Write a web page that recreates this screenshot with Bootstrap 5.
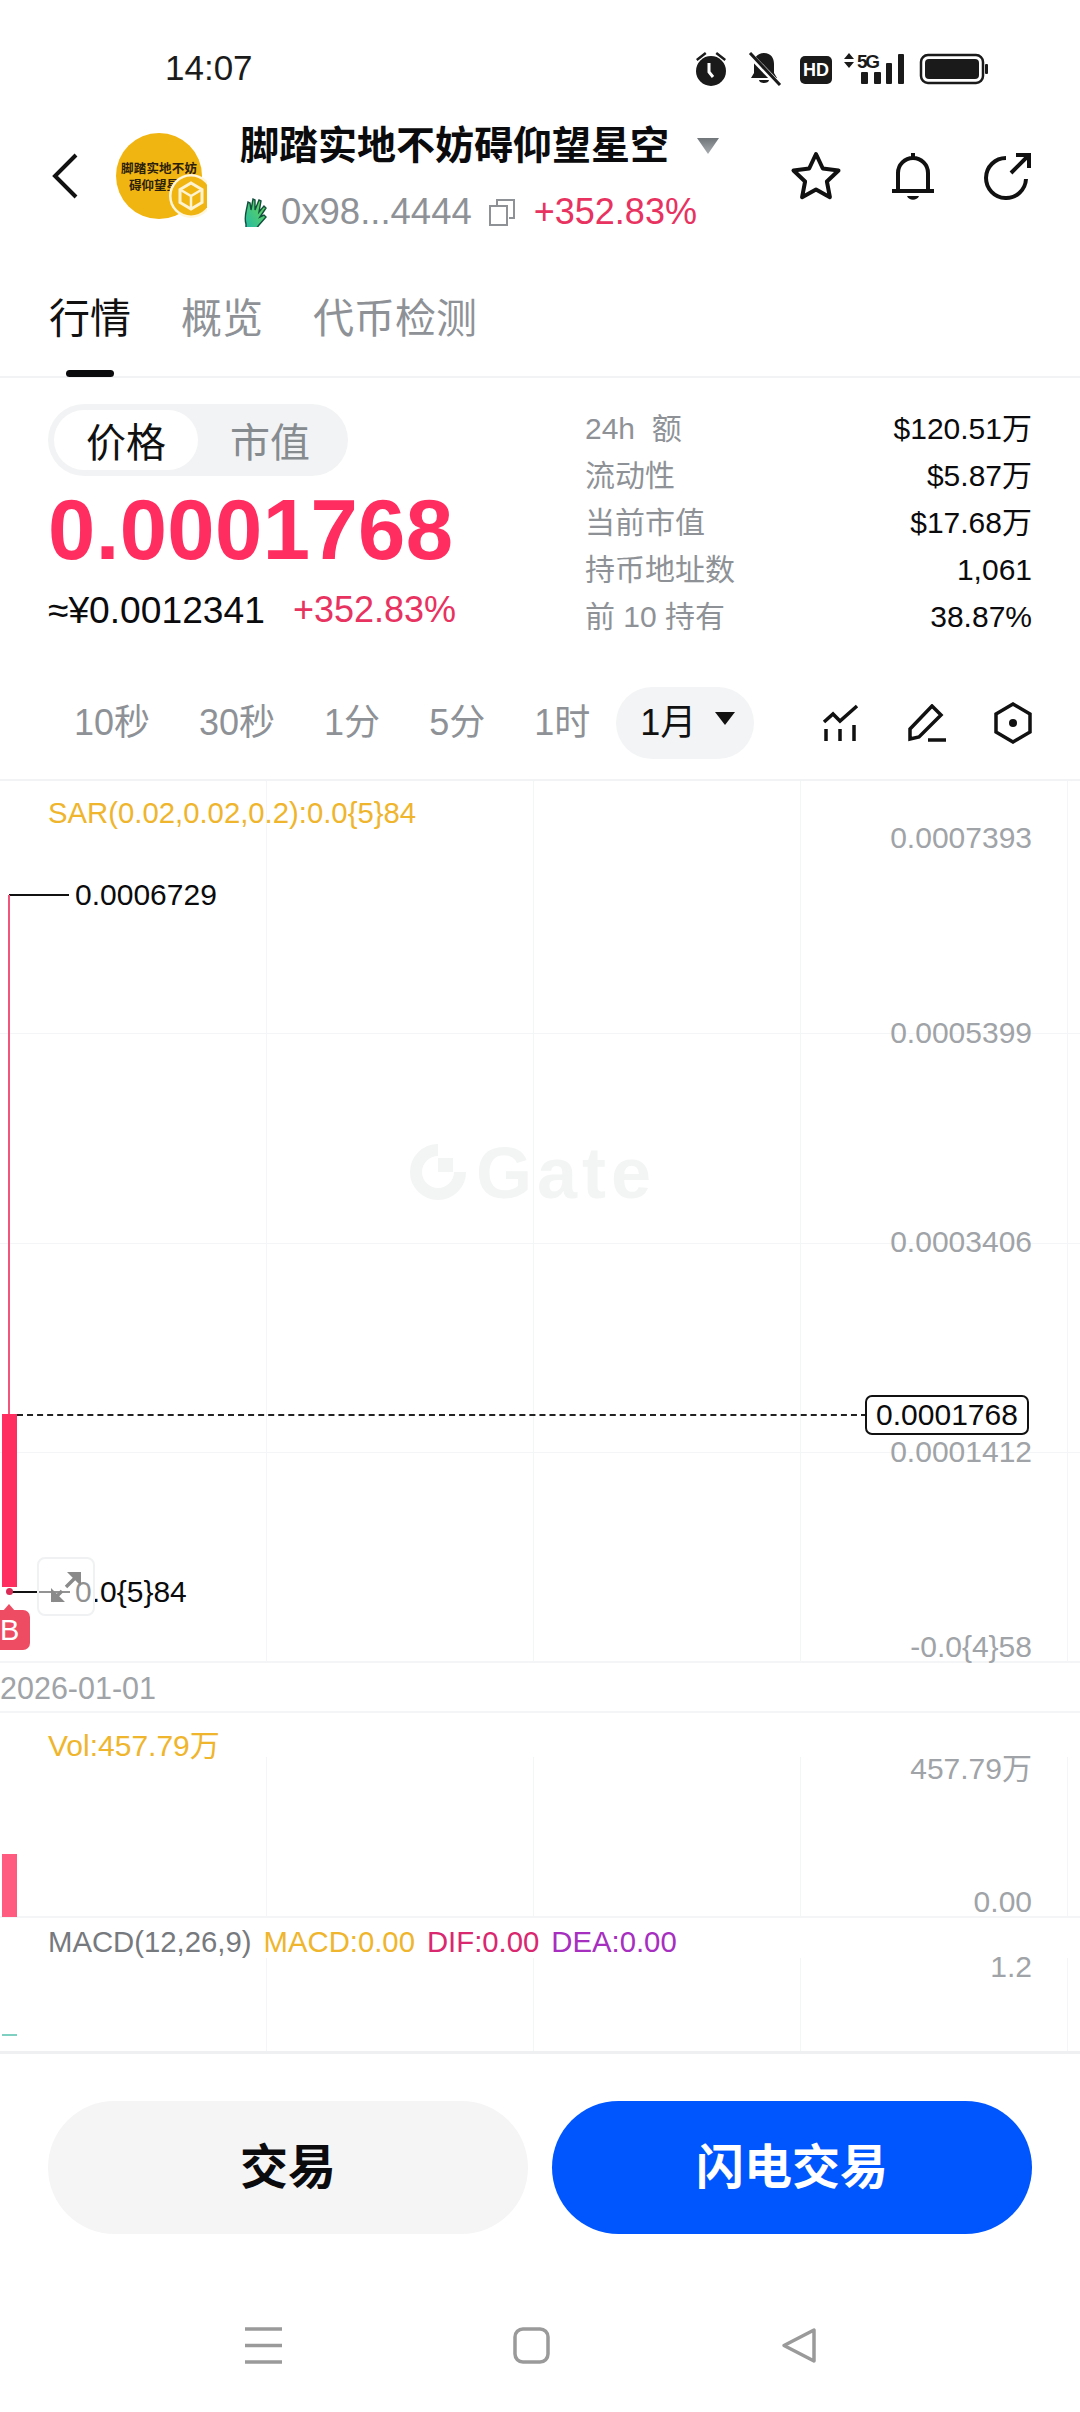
<!DOCTYPE html>
<html lang="zh-CN">
<head>
  <meta charset="UTF-8" />
  <meta name="viewport" content="width=device-width, initial-scale=1.0"/>
  <title>行情</title>
  <link href="https://cdn.jsdelivr.net/npm/bootstrap@5.3.3/dist/css/bootstrap.min.css" rel="stylesheet">
  <style>
    body { width: 1080px; height: 2412px; overflow: hidden; background: #fff; color: #0b0b0d; font-family: "Liberation Sans", "Noto Sans CJK SC", sans-serif; }
    .status-row { height: 100px; padding: 40px 91px 0 165px; }
    .status-time { font-size: 35px; line-height: 56px; color: #1b1b1b; }
    .status-icons { height: 56px; }
    .head-row { height: 170px; padding: 0 48px 0 52px; }
    .back-icon { margin-top: 53px; flex: none; }
    .coin-avatar { width: 92px; height: 92px; margin-left: 37px; margin-top: 30px; flex: none; }
    .coin-info { margin-left: 33px; margin-top: 20px; }
    .coin-title { font-size: 39px; line-height: 52px; font-weight: 700; }
    .coin-sub { height: 44px; margin-top: 18px; font-size: 36.500px; line-height: 44px; color: #8e9297; }
    .hand-icon { margin-left: 3px; margin-right: 11px; flex: none; }
    .copy-icon { margin-left: 17px; margin-right: 19px; flex: none; }
    .head-actions { margin-top: 50px; gap: 48px; }
    .up-text { color: #e8325f; }
    .tab-row { height: 108px; padding: 21px 0 0 49px; border-bottom: 2px solid #f2f3f4; font-size: 41px; line-height: 56px; color: #8e9297; gap: 50px; }
    .tab-on { color: #111; position: relative; }
    .tab-on::after { content: ""; position: absolute; left: 17px; top: 79px; width: 48px; height: 7px; border-radius: 4px; background: #0b0b0d; }
    .quote-row { height: 298px; padding: 26px 48px 0; }
    .mode-switch { width: 300px; height: 72px; padding: 6px; border-radius: 36px; background: #f2f3f4; font-size: 40px; line-height: 66px; color: #868b90; }
    .mode-on { width: 144px; height: 60px; background: #fff; color: #111; border-radius: 30px; text-align: center; }
    .mode-off { width: 144px; height: 60px; text-align: center; }
    .price-big { margin-top: 8px; font-size: 85px; line-height: 92px; font-weight: 700; color: #ff2d60; letter-spacing: .4px; }
    .price-sub { margin-top: 12px; font-size: 37.200px; line-height: 44px; white-space: nowrap; }
    .price-pct { font-size: 36px; margin-left: 28px; }
    .stat-list { width: 447px; margin-top: 1px; }
    .stat-line { height: 47px; line-height: 47px; font-size: 30px; }
    .stat-key { color: #8e9297; }
    .range-row { height: 103px; padding: 0 48px 10px 74px; font-size: 36px; color: #8e9297; }
    .range-list { gap: 49px; margin-right: 26px; }
    .range-pill { width: 138px; height: 72px; border-radius: 36px; background: #f3f4f5; color: #111; line-height: 72px; padding-left: 24px; gap: 19px; }
    .range-tri { width: 0; height: 0; border-left: 10px solid transparent; border-right: 10px solid transparent; border-top: 13px solid #111; margin-top: -8px; }
    .tool-icons { gap: 47px; }
    .chart-lines { background-image: linear-gradient(to right, transparent 266px, #f4f5f6 266px, #f4f5f6 267px, transparent 267px); background-size: 267px 100%; }
    .chart-main { height: 884px; border-top: 2px solid #f2f3f4; border-bottom: 2px solid #f4f5f6; position: relative; }
    .date-row { height: 50px; border-bottom: 2px solid #f4f5f6; font-size: 30.500px; line-height: 50px; color: #a0a3a7; }
    .vol-pane { height: 205px; position: relative; border-bottom: 2px solid #f4f5f6; }
    .macd-pane { height: 136px; position: relative; border-bottom: 3px solid #eff0f1; }
    .pane-grid { position: absolute; left: 0; right: 0; bottom: 0; }
    .hline { position: absolute; left: 0; right: 0; height: 1px; background: #f4f5f6; }
    .axis-val { position: absolute; right: 48px; font-size: 30px; line-height: 36px; color: #a0a3a7; white-space: nowrap; }
    .chart-text { position: absolute; font-size: 30px; line-height: 36px; white-space: nowrap; }
    .text-sm29 { font-size: 29.300px; }
    .gold-text { color: #efb52d; }
    .wick-line { position: absolute; left: 8px; width: 2px; background: #f0557c; }
    .candle-body { position: absolute; left: 2px; width: 15px; background: #ff2d60; }
    .lead-line { position: absolute; height: 2px; background: #111; }
    .last-dash { position: absolute; left: 17px; width: 850px; border-top: 2px dashed #222; }
    .last-box { position: absolute; left: 865px; top: 614px; width: 164px; height: 40px; background: #fff; border: 2px solid #111; border-radius: 7px; font-size: 30px; line-height: 35px; text-align: center; }
    .expand-box { position: absolute; left: 37px; top: 776px; width: 58px; height: 59px; border: 2px solid #f0f1f2; border-radius: 8px; background: rgba(255,255,255,.55); }
    .buy-tag { position: absolute; left: 0; top: 829px; width: 30px; height: 40px; background: #ee4c63; color: #fff; border-radius: 0 7px 7px 0; font-size: 29px; line-height: 41px; }
    .buy-tag::before { content: ""; position: absolute; left: 3px; top: -6px; border-left: 6px solid transparent; border-right: 6px solid transparent; border-bottom: 7px solid #ee4c63; }
    .buy-dot { position: absolute; left: 6px; top: 807px; width: 7px; height: 7px; border-radius: 50%; background: #d92b55; }
    .gate-mark { position: absolute; left: 408px; top: 359px; }
    .gate-word { margin: -3px 0 0 8px; font-size: 72px; line-height: 72px; font-weight: 700; letter-spacing: 5px; color: #f3f4f4; }
    .action-row { height: 186px; padding: 47px 48px 0; gap: 24px; }
    .action-btn { width: 480px; height: 133px; border-radius: 67px; border: 0; font-size: 48px; font-weight: 700; line-height: 133px; padding: 0; }
    .btn-soft { background: #f5f5f6; color: #0b0b0d; }
    .btn-flash { background: #0056fe; color: #fff; }
    .nav-row { height: 130px; padding: 87px 0 0 245px; }
    .macd-gray { color: #76797d; }
    .macd-pink { color: #d9286f; }
    .macd-purple { color: #a62fc0; }
  </style>
</head>
<body>
  <div class="status-row d-flex justify-content-between">
    <div class="status-time">14:07</div>
    <svg class="status-icons" width="294" height="56" viewBox="696 40 294 56">
      <g fill="#1a1a1a" stroke="none">
        <circle cx="712" cy="71" r="15"/>
        <path d="M697 59l9-7 1.500 2-9 7zM727 59l-9-7-1.500 2 9 7z"/>
      </g>
      <path d="M710 63v9l4 5" fill="none" stroke="#fff" stroke-width="3"/>
      <path d="M765 53c-7 0-10 5-10 11v9l-3 5h26l-3-5v-9c0-6-3-11-10-11zM760 80h10c0 4-10 4-10 0z" fill="#1a1a1a"/>
      <path d="M750 54l31 32" stroke="#fff" stroke-width="6"/>
      <path d="M751 53l30 32" stroke="#1a1a1a" stroke-width="3"/>
      <rect x="801" y="56" width="32" height="28" rx="5" fill="#1a1a1a"/>
      <text x="817" y="76" text-anchor="middle" font-size="18" font-weight="700" fill="#fff" font-family="Liberation Sans">HD</text>
      <path d="M845 59l5-6 5 6zM845 62l5 6 5-6z" fill="#1a1a1a"/>
      <text x="858" y="68" font-size="19" font-weight="700" fill="#1a1a1a" font-family="Liberation Sans" textLength="23">5G</text>
      <g fill="#1a1a1a">
        <rect x="862" y="72" width="7" height="12" rx="1"/>
        <rect x="875" y="72" width="7" height="12" rx="1"/>
        <rect x="887" y="63" width="6" height="21" rx="1"/>
        <rect x="899" y="54" width="6" height="30" rx="1"/>
        <rect x="926" y="59" width="54" height="20" rx="4"/>
        <rect x="986" y="64" width="3" height="10" rx="1"/>
      </g>
      <rect x="922" y="55" width="62" height="28" rx="7" fill="none" stroke="#1a1a1a" stroke-width="2.500"/>
    </svg>
  </div>

  <div class="head-row d-flex align-items-start">
    <svg class="back-icon" width="26" height="46" viewBox="0 0 26 46"><path d="M24 2L3 23l21 21" fill="none" stroke="#111" stroke-width="4"/></svg>
    <svg class="coin-avatar" viewBox="0 0 92 92">
      <circle cx="44" cy="46" r="43" fill="#f1b512"/>
      <text x="44" y="43" text-anchor="middle" font-size="12.500" font-weight="700" fill="#2b2008" font-family="Noto Sans CJK SC" textLength="76">脚踏实地不妨</text>
      <text x="39" y="60" text-anchor="middle" font-size="12.500" font-weight="700" fill="#2b2008" font-family="Noto Sans CJK SC">碍仰望星</text>
      <circle cx="76" cy="66" r="22" fill="#fff6dc"/>
      <circle cx="76" cy="66" r="19.500" fill="#f1b512"/>
      <g fill="none" stroke="#fff4d2" stroke-width="3">
        <path d="M76 53l11 6.500v13L76 79l-11-6.500v-13z"/>
        <path d="M65 59.500L76 66l11-6.500M76 66v13" stroke-width="2.500"/>
      </g>
    </svg>
    <div class="coin-info flex-grow-1">
      <div class="d-flex align-items-center coin-title">
        <span>脚踏实地不妨碍仰望星空</span>
        <svg style="margin-left:28px" width="22" height="18" viewBox="0 0 22 18"><defs><linearGradient id="caretFill" x1="0" y1="0" x2="0" y2="1"><stop offset="0" stop-color="#70757a"/><stop offset="1" stop-color="#a8acb0"/></linearGradient></defs><path d="M0 1h22L11 17z" fill="url(#caretFill)"/></svg>
      </div>
      <div class="coin-sub d-flex align-items-center">
        <svg class="hand-icon" width="27" height="30" viewBox="0 0 27 30"><defs><linearGradient id="handFill" x1="1" y1="0" x2="0" y2="1"><stop offset="0" stop-color="#6fd84f"/><stop offset="1" stop-color="#1fb8a8"/></linearGradient></defs><path d="M3 27C1 21 3 15 4 10l1-5 2 1 1 7 2-11 2 1 0 10 4-10 2 1-2 11 5-6 2 2-6 9 4-2 2 2-7 8c-2 3-4 5-7 5-3 0-5-1-6-2z" fill="url(#handFill)" stroke="#12503e" stroke-width="1.400"/></svg>
        <span>0x98...4444</span>
        <svg class="copy-icon" width="26" height="27" viewBox="0 0 26 27"><path d="M8 6V1h17v18h-5M1 7h17v19H1z" fill="none" stroke="#8e9297" stroke-width="2"/></svg>
        <span class="up-text" style="font-size:36px">+352.83%</span>
      </div>
    </div>
    <div class="head-actions d-flex align-items-center">
      <svg width="52" height="50" viewBox="0 0 52 50"><path d="M26 3l6.800 14.500 15.700 2-11.600 11 3 15.700L26 38.500l-13.900 7.700 3-15.700L3.500 19.500l15.700-2z" fill="none" stroke="#111" stroke-width="4" stroke-linejoin="round"/></svg>
      <svg width="46" height="52" viewBox="0 0 46 52"><path d="M2 41h42M8 41V23a15 15 0 0 1 30 0v18M23 3v5" fill="none" stroke="#111" stroke-width="4"/><path d="M17 46h12c-2 5-10 5-12 0z" fill="#111"/></svg>
      <svg width="48" height="48" viewBox="0 0 48 48"><path d="M42 27A20 20 0 1 1 22 6M27 21L44 4M32 3h13v13" fill="none" stroke="#111" stroke-width="4"/></svg>
    </div>
  </div>

  <div class="tab-row d-flex">
    <div class="tab-on">行情</div>
    <div>概览</div>
    <div>代币检测</div>
  </div>

  <div class="quote-row d-flex justify-content-between">
    <div>
      <div class="mode-switch d-flex">
        <div class="mode-on">价格</div>
        <div class="mode-off">市值</div>
      </div>
      <div class="price-big">0.0001768</div>
      <div class="price-sub d-flex align-items-center"><span>≈¥0.0012341</span><span class="up-text price-pct">+352.83%</span></div>
    </div>
    <div class="stat-list">
      <div class="stat-line d-flex justify-content-between"><span class="stat-key">24h &nbsp;额</span><span>$120.51万</span></div>
      <div class="stat-line d-flex justify-content-between"><span class="stat-key">流动性</span><span>$5.87万</span></div>
      <div class="stat-line d-flex justify-content-between"><span class="stat-key">当前市值</span><span>$17.68万</span></div>
      <div class="stat-line d-flex justify-content-between"><span class="stat-key">持币地址数</span><span>1,061</span></div>
      <div class="stat-line d-flex justify-content-between"><span class="stat-key">前 10 持有</span><span>38.87%</span></div>
    </div>
  </div>

  <div class="range-row d-flex align-items-center">
    <div class="range-list d-flex">
      <span>10秒</span><span>30秒</span><span>1分</span><span>5分</span><span>1时</span>
    </div>
    <div class="range-pill d-flex align-items-center"><span>1月</span><span class="range-tri"></span></div>
    <div class="tool-icons d-flex align-items-center ms-auto">
      <svg width="38" height="38" viewBox="0 0 38 38"><path d="M2 18l9-8 7 7L35 2M4 25v12M18 25v12M32 21v16" fill="none" stroke="#111" stroke-width="3.500"/></svg>
      <svg width="40" height="38" viewBox="0 0 40 38"><path d="M25 2l9 9L12 33l-9 2 0-10zM21 36h18" fill="none" stroke="#111" stroke-width="3.500"/></svg>
      <svg width="38" height="42" viewBox="0 0 38 42"><path d="M19 2l17 10v18L19 40 2 30V12z" fill="none" stroke="#111" stroke-width="3.500"/><circle cx="19" cy="21" r="4" fill="#111"/></svg>
    </div>
  </div>

  <div class="chart-main chart-lines">
    <div class="hline" style="top:252px"></div>
    <div class="hline" style="top:462px"></div>
    <div class="hline" style="top:671px"></div>
    <div class="gate-mark d-flex align-items-start">
      <svg width="60" height="64" viewBox="0 0 60 64">
        <path d="M30 10A22 22 0 1 0 52 32" fill="none" stroke="#f3f4f4" stroke-width="12"/>
        <rect x="30" y="18" width="15" height="14" fill="#f3f4f4"/>
      </svg>
      <span class="gate-word">Gate</span>
    </div>
    <div class="chart-text text-sm29 gold-text" style="left:48px;top:14px;">SAR(0.02,0.02,0.2):0.0{5}84</div>
    <div class="axis-val" style="top:39px">0.0007393</div>
    <div class="axis-val" style="top:234px">0.0005399</div>
    <div class="axis-val" style="top:443px">0.0003406</div>
    <div class="axis-val" style="top:653px">0.0001412</div>
    <div class="axis-val" style="top:848px">-0.0{4}58</div>
    <div class="lead-line" style="left:9px;top:113px;width:60px"></div>
    <div class="chart-text" style="left:75px;top:96px">0.0006729</div>
    <div class="wick-line" style="top:114px;height:519px"></div>
    <div class="candle-body" style="top:633px;height:173px"></div>
    <div class="last-dash" style="top:633px"></div>
    <div class="last-box">0.0001768</div>
    <div class="lead-line" style="left:10px;top:810px;width:60px"></div>
    <div class="buy-dot"></div>
    <div class="chart-text" style="left:75px;top:793px">0.0{5}84</div>
    <div class="expand-box d-flex align-items-center justify-content-center">
      <svg width="32" height="32" viewBox="0 0 32 32"><path d="M16 16L27 5M2 30l10-10" stroke="#8a8a8a" stroke-width="3.500"/><path d="M17 1h14v14zM1 17v14h14z" fill="#8a8a8a"/></svg>
    </div>
    <div class="buy-tag">B</div>
  </div>

  <div class="date-row">2026-01-01</div>

  <div class="vol-pane">
    <div class="pane-grid chart-lines" style="top:44px"></div>
    <div class="chart-text gold-text" style="left:48px;top:15px">Vol:457.79万</div>
    <div class="axis-val" style="top:38px">457.79万</div>
    <div class="axis-val" style="top:171px">0.00</div>
    <div class="candle-body" style="top:141px;height:63px;background:#ff5a80"></div>
  </div>

  <div class="macd-pane">
    <div class="pane-grid chart-lines" style="top:40px"></div>
    <div class="chart-text text-sm29 d-flex" style="left:48px;top:6px;gap:12px">
      <span class="macd-gray">MACD(12,26,9)</span>
      <span class="gold-text">MACD:0.00</span>
      <span class="macd-pink">DIF:0.00</span>
      <span class="macd-purple">DEA:0.00</span>
    </div>
    <div class="axis-val" style="top:31px">1.2</div>
    <div class="candle-body" style="top:116px;height:2px;background:#7fd0c0"></div>
  </div>

  <div class="action-row d-flex">
    <button class="btn action-btn btn-soft">交易</button>
    <button class="btn action-btn btn-flash">闪电交易</button>
  </div>

  <div class="nav-row d-flex align-items-start">
    <svg width="37" height="37" viewBox="0 0 37 37"><path d="M0 2h37M0 18.500h37M0 35h37" stroke="#9a9a9a" stroke-width="3.500"/></svg>
    <svg width="37" height="37" viewBox="0 0 37 37" style="margin-left:231px"><rect x="2" y="2" width="33" height="33" rx="8" fill="none" stroke="#9a9a9a" stroke-width="3.500"/></svg>
    <svg width="36" height="37" viewBox="0 0 36 37" style="margin-left:231px"><path d="M33 3v31L3 18.500z" fill="none" stroke="#9a9a9a" stroke-width="3.500" stroke-linejoin="round"/></svg>
  </div>

  <script src="https://cdn.jsdelivr.net/npm/bootstrap@5.3.3/dist/js/bootstrap.bundle.min.js"></script>
</body>
</html>
